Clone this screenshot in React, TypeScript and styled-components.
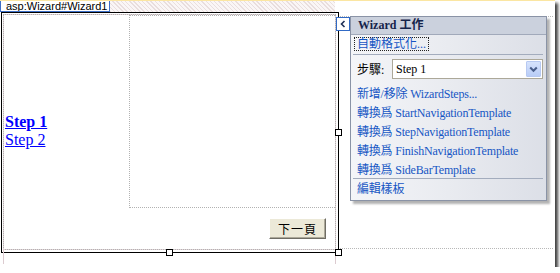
import React from "react";
import styled, { createGlobalStyle } from "styled-components";

const Global = createGlobalStyle`
  html, body { margin: 0; padding: 0; background: #fff; }
  body { font-family: "Liberation Serif", "Noto Sans CJK TC", serif; }
`;

const Frame = styled.div`
  position: relative;
  width: 555px;
  height: 267px;
  background: #fff;
  box-shadow: 3px 3px 3px rgba(0, 0, 0, 0.75);
  display: flex;
  flex-direction: column;
`;

const TopStrip = styled.div`
  display: flex;
  height: 11px;
  border-top: 1px solid #fbe6a2;
`;

const Tab = styled.div`
  width: 110px;
  height: 11px;
  box-sizing: border-box;
  border: 1px solid #3d6fc8;
  border-top: none;
  background: #fff;
  font: 11px "Liberation Sans", Arial, sans-serif;
  line-height: 10px;
  padding-left: 5px;
  color: #000;
  overflow: hidden;
  white-space: nowrap;
`;

const Hatch = styled.div`
  width: 225px;
  background: repeating-linear-gradient(
    45deg,
    #e9dede 0px,
    #e9dede 1px,
    #faf6f6 1px,
    #faf6f6 3px
  );
`;

const Designer = styled.div`
  margin-left: 1px;
  width: 338px;
  height: 241px;
  box-sizing: border-box;
  border: 1px solid #000;
  padding: 1px 2px 2px 1px;
`;

const WizardTable = styled.div`
  height: 100%;
  box-sizing: border-box;
  border: 1px dotted #b2b2b2;
  background: linear-gradient(#fff, #fff) padding-box, #e2d3d7 border-box;
  display: grid;
  grid-template-columns: 125px 1fr;
`;

const SideBar = styled.div`
  display: flex;
  flex-direction: column;
  justify-content: center;
  padding-left: 1px;
  padding-bottom: 2px;
`;

const StepLink = styled.a<{ $active?: boolean }>`
  font: ${(p) => (p.$active ? "bold" : "normal")} 16px "Liberation Serif", serif;
  line-height: 18px;
  color: #0000ff;
  text-decoration: underline;
  cursor: pointer;
`;

const MainCol = styled.div`
  display: flex;
  flex-direction: column;
`;

const StepContent = styled.div`
  height: 193px;
  box-sizing: border-box;
  border: 1px dotted #b2b2b2;
  border-right: none;
`;

const NavArea = styled.div`
  flex: 1;
  display: flex;
  justify-content: flex-end;
  align-items: flex-start;
  padding: 10px 9px 0 0;
`;

const NavButton = styled.button`
  width: 57px;
  height: 21px;
  box-sizing: border-box;
  background: #ece9d8;
  border: 1px solid;
  border-color: #fff #6f6d64 #6f6d64 #fff;
  box-shadow: inset -1px -1px 0 #aca899;
  font: 12px "Noto Sans CJK TC", sans-serif;
  letter-spacing: 1px;
  color: #000;
  padding: 0;
  line-height: 18px;
`;

const Handle = styled.div`
  position: absolute;
  width: 7px;
  height: 7px;
  box-sizing: border-box;
  background: #fff;
  border: 1px solid #000;
`;

const GuideV = styled.div`
  position: absolute;
  width: 1px;
  background: #dccbd0;
`;

const DottedH = styled.div`
  position: absolute;
  height: 0;
  border-top: 1px dotted #b8b8b8;
`;

const TagArrow = styled.div`
  position: absolute;
  left: 336px;
  top: 17px;
  width: 14px;
  height: 14px;
  box-sizing: border-box;
  border: 1px solid #316ac5;
  background: #fff;
  display: flex;
  align-items: center;
  justify-content: center;
`;

const Panel = styled.div`
  position: absolute;
  left: 350px;
  top: 16px;
  width: 197px;
  height: 185px;
  box-sizing: border-box;
  border: 1px solid #8a93a6;
  box-shadow: 3px 3px 2px rgba(0, 0, 0, 0.3);
  display: flex;
  flex-direction: column;
  background: linear-gradient(90deg, #f4f5f8 0%, #e9ebf0 50%, #dcdfe7 100%);
`;

const PanelHeader = styled.div`
  height: 17px;
  border-bottom: 1px solid #a1a9ba;
  background: #cbd1dd;
  font: bold 12px "Liberation Serif", "Noto Sans CJK TC", serif;
  color: #16244a;
  line-height: 16px;
  padding-left: 7px;
`;

const PanelBody = styled.div`
  display: flex;
  flex-direction: column;
  padding: 2px 0 0 0;
`;

const FocusLink = styled.span`
  align-self: flex-start;
  margin-left: 3px;
  height: 14px;
  width: 75px;
  box-sizing: border-box;
  border: 1px dotted #222;
  padding-left: 2px;
  font: 12px "Liberation Serif", "Noto Sans CJK TC", serif;
  line-height: 12px;
  color: #1656c4;
  white-space: nowrap;
`;

const Separator = styled.div<{ $mt: number }>`
  height: 1px;
  margin: ${(p) => p.$mt}px 3px 0 2px;
  background: #a3acbd;
`;

const StepRow = styled.div`
  display: flex;
  align-items: center;
  height: 20px;
  margin-top: 4px;
  padding-left: 6px;
  font: 12px "Liberation Serif", "Noto Sans CJK TC", serif;
  color: #000;
`;

const Label = styled.span`
  width: 35px;
`;

const Combo = styled.div`
  width: 151px;
  height: 20px;
  box-sizing: border-box;
  border: 1px solid #aca899;
  background: #fff;
  display: flex;
  align-items: center;
  justify-content: space-between;
  padding: 0 1px 0 3px;
  font: 12px "Liberation Serif", serif;
`;

const DropButton = styled.div`
  width: 15px;
  height: 16px;
  box-sizing: border-box;
  border: 1px solid #b7c9f2;
  border-radius: 1px;
  background: linear-gradient(#d6e3fd, #b9cdf7);
  display: flex;
  align-items: center;
  justify-content: center;
`;

const LinkList = styled.div`
  display: flex;
  flex-direction: column;
  margin-top: 4px;
`;

const TaskLink = styled.a<{ $h?: number }>`
  height: ${(p) => p.$h ?? 19}px;
  display: flex;
  align-items: center;
  padding-left: 6px;
  font: 12px "Liberation Serif", "Noto Sans CJK TC", serif;
  color: #1656c4;
  letter-spacing: -0.2px;
  white-space: nowrap;
  cursor: pointer;
`;

const tasks = [
  "新增/移除 WizardSteps...",
  "轉換爲 StartNavigationTemplate",
  "轉換爲 StepNavigationTemplate",
  "轉換爲 FinishNavigationTemplate",
  "轉換爲 SideBarTemplate",
];

export default function App() {
  return (
    <>
      <Global />
      <Frame>
        <TopStrip>
          <Tab>asp:Wizard#Wizard1</Tab>
          <Hatch />
        </TopStrip>
        <Designer>
          <WizardTable>
            <SideBar>
              <StepLink $active>Step 1</StepLink>
              <StepLink>Step 2</StepLink>
            </SideBar>
            <MainCol>
              <StepContent />
              <NavArea>
                <NavButton>下一頁</NavButton>
              </NavArea>
            </MainCol>
          </WizardTable>
        </Designer>

        <GuideV style={{ left: 3, top: 249, height: 15 }} />
        <GuideV style={{ left: 335, top: 249, height: 15 }} />
        <DottedH style={{ left: 340, top: 248, width: 213 }} />
        <DottedH style={{ left: 340, top: 16, width: 213 }} />

        <Handle style={{ left: 166, top: 249 }} />
        <Handle style={{ left: 335, top: 129 }} />
        <Handle style={{ left: 335, top: 249 }} />

        <TagArrow>
          <svg width="8" height="10" viewBox="0 0 8 10">
            <path d="M5.5 2 L2.5 5 L5.5 8" fill="none" stroke="#1e2f56" strokeWidth="1.6" />
          </svg>
        </TagArrow>

        <Panel>
          <PanelHeader>Wizard 工作</PanelHeader>
          <PanelBody>
            <FocusLink>自動格式化...</FocusLink>
            <Separator $mt={3} />
            <StepRow>
              <Label>步驟:</Label>
              <Combo>
                <span>Step 1</span>
                <DropButton>
                  <svg width="9" height="7" viewBox="0 0 9 7">
                    <path d="M1.2 1.5 L4.5 4.8 L7.8 1.5" fill="none" stroke="#4a5f8c" strokeWidth="2" />
                  </svg>
                </DropButton>
              </Combo>
            </StepRow>
            <LinkList>
              {tasks.map((t) => (
                <TaskLink key={t}>{t}</TaskLink>
              ))}
            </LinkList>
            <Separator $mt={0} />
            <TaskLink $h={18}>編輯樣板</TaskLink>
          </PanelBody>
        </Panel>
      </Frame>
    </>
  );
}
